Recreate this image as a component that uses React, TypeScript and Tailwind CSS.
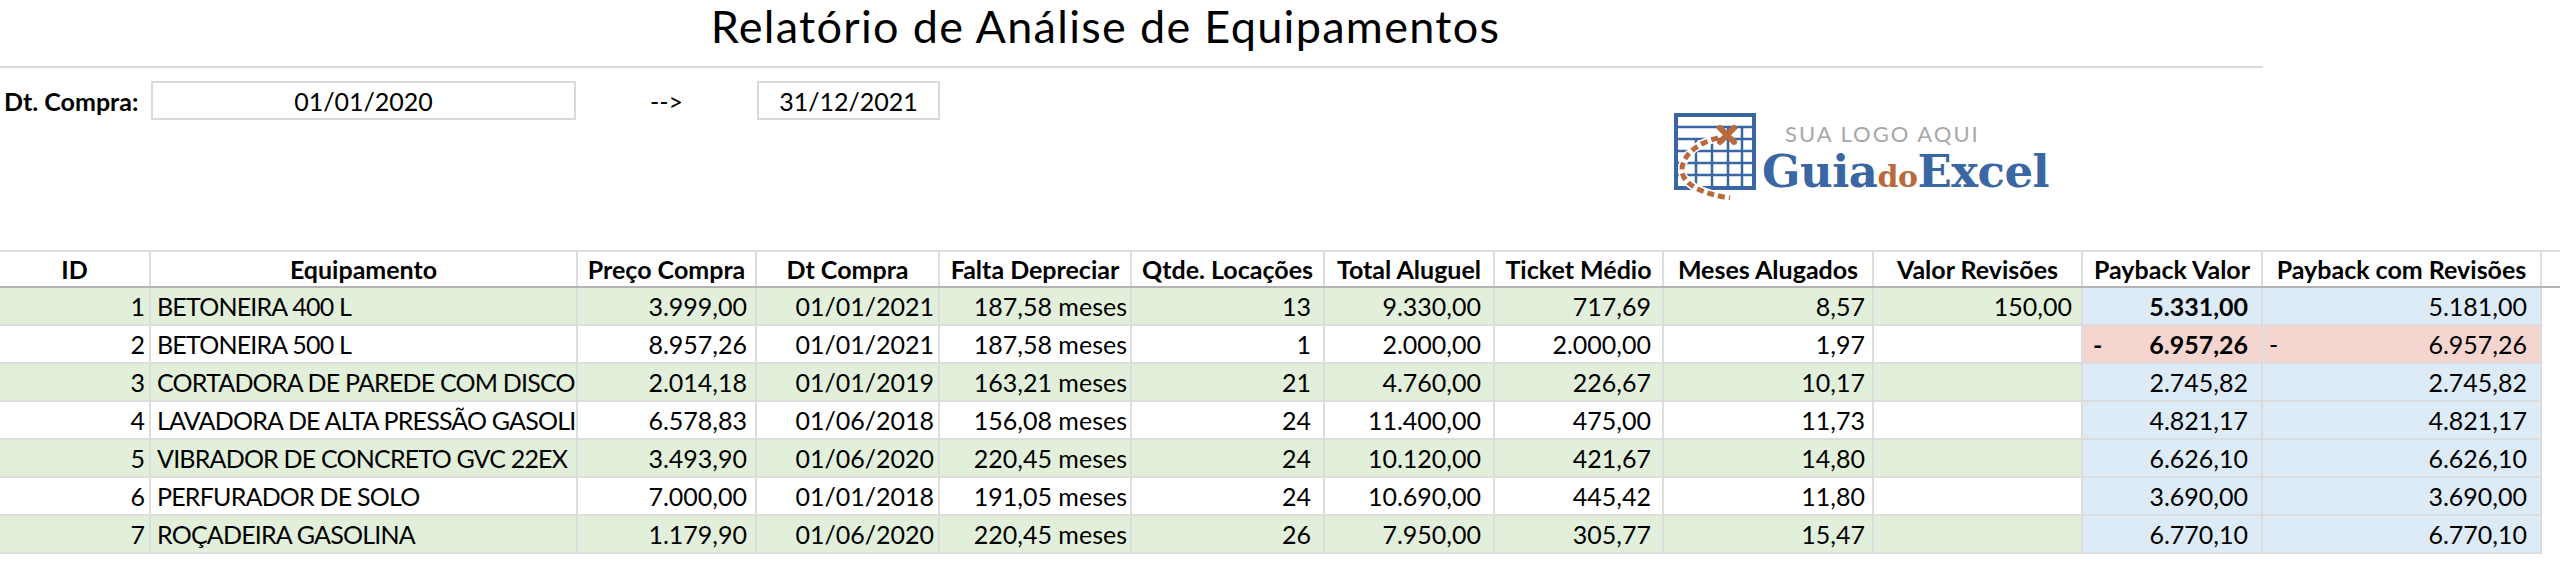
import React from "react";

const GRID =
  "grid grid-cols-[151px_427px_179px_183px_192px_193px_170px_169px_210px_209px_180px_279px]";

const HEADERS = [
  "ID",
  "Equipamento",
  "Preço Compra",
  "Dt Compra",
  "Falta Depreciar",
  "Qtde. Locações",
  "Total Aluguel",
  "Ticket Médio",
  "Meses Alugados",
  "Valor Revisões",
  "Payback Valor",
  "Payback com Revisões",
];

type Row = {
  id: number;
  name: string;
  preco: string;
  dt: string;
  falta: string;
  qtde: string;
  total: string;
  ticket: string;
  meses: string;
  revisoes: string;
  payback: string;
  paybackRev: string;
  negative?: boolean;
  boldPayback?: boolean;
};

const ROWS: Row[] = [
  { id: 1, name: "BETONEIRA 400 L", preco: "3.999,00", dt: "01/01/2021", falta: "187,58 meses", qtde: "13", total: "9.330,00", ticket: "717,69", meses: "8,57", revisoes: "150,00", payback: "5.331,00", paybackRev: "5.181,00", boldPayback: true },
  { id: 2, name: "BETONEIRA 500 L", preco: "8.957,26", dt: "01/01/2021", falta: "187,58 meses", qtde: "1", total: "2.000,00", ticket: "2.000,00", meses: "1,97", revisoes: "", payback: "6.957,26", paybackRev: "6.957,26", negative: true, boldPayback: true },
  { id: 3, name: "CORTADORA DE PAREDE COM DISCO", preco: "2.014,18", dt: "01/01/2019", falta: "163,21 meses", qtde: "21", total: "4.760,00", ticket: "226,67", meses: "10,17", revisoes: "", payback: "2.745,82", paybackRev: "2.745,82" },
  { id: 4, name: "LAVADORA DE ALTA PRESSÃO GASOLINA", preco: "6.578,83", dt: "01/06/2018", falta: "156,08 meses", qtde: "24", total: "11.400,00", ticket: "475,00", meses: "11,73", revisoes: "", payback: "4.821,17", paybackRev: "4.821,17" },
  { id: 5, name: "VIBRADOR DE CONCRETO GVC 22EX", preco: "3.493,90", dt: "01/06/2020", falta: "220,45 meses", qtde: "24", total: "10.120,00", ticket: "421,67", meses: "14,80", revisoes: "", payback: "6.626,10", paybackRev: "6.626,10" },
  { id: 6, name: "PERFURADOR DE SOLO", preco: "7.000,00", dt: "01/01/2018", falta: "191,05 meses", qtde: "24", total: "10.690,00", ticket: "445,42", meses: "11,80", revisoes: "", payback: "3.690,00", paybackRev: "3.690,00" },
  { id: 7, name: "ROÇADEIRA GASOLINA", preco: "1.179,90", dt: "01/06/2020", falta: "220,45 meses", qtde: "26", total: "7.950,00", ticket: "305,77", meses: "15,47", revisoes: "", payback: "6.770,10", paybackRev: "6.770,10" },
];

function LogoIcon() {
  return (
    <svg width="90" height="90" viewBox="0 0 90 90" className="shrink-0">
      <g stroke="#3a67a3" fill="none">
        <rect x="6" y="5" width="78" height="73" strokeWidth="4" />
        <line x1="6" y1="17" x2="84" y2="17" strokeWidth="2.5" />
        <line x1="6" y1="29" x2="84" y2="29" strokeWidth="2.5" />
        <line x1="6" y1="41" x2="84" y2="41" strokeWidth="2.5" />
        <line x1="6" y1="53" x2="84" y2="53" strokeWidth="2.5" />
        <line x1="6" y1="65" x2="84" y2="65" strokeWidth="2.5" />
        <line x1="26" y1="29" x2="26" y2="78" strokeWidth="2.5" />
        <line x1="42" y1="29" x2="42" y2="78" strokeWidth="2.5" />
        <line x1="58" y1="17" x2="58" y2="78" strokeWidth="2.5" />
        <line x1="72" y1="17" x2="72" y2="78" strokeWidth="2.5" />
      </g>
      <path
        d="M48 28 C 30 32, 12 44, 12 60 C 12 75, 34 84, 60 88"
        stroke="#ffffff"
        strokeWidth="8"
        fill="none"
      />
      <path
        d="M48 28 C 30 32, 12 44, 12 60 C 12 75, 34 84, 60 88"
        stroke="#b96a3c"
        strokeWidth="5"
        strokeDasharray="7 4"
        fill="none"
      />
      <g stroke="#b96a3c" strokeWidth="6" strokeLinecap="round">
        <line x1="50" y1="18" x2="64" y2="32" />
        <line x1="64" y1="18" x2="50" y2="32" />
      </g>
    </svg>
  );
}

function Logo() {
  return (
    <div className="flex items-start ml-[730px] mt-[42px]">
      <LogoIcon />
      <div className="flex flex-col items-start ml-[2px]">
        <span className="pl-[23px] mt-[12px] text-[22px] leading-[24px] tracking-[2px] font-normal text-[#a6a8a8] font-[Lato,sans-serif]">
          SUA LOGO AQUI
        </span>
        <span className="mt-[2px] leading-[48px] font-bold text-[#3a67a3] font-['DejaVu_Serif',serif] text-[45px] tracking-[-0.5px]">
          Guia
          <span className="text-[#b96a3c] text-[30px]">do</span>
          Excel
        </span>
      </div>
    </div>
  );
}

function HeaderRow() {
  return (
    <div className="w-full border-t-2 border-b-2 border-t-[#dcdcdc] border-b-[#b3b3b3]">
      <div className={GRID + " w-[2542px] h-[34px]"}>
        {HEADERS.map((h) => (
          <div
            key={h}
            className="flex items-center justify-center border-r-2 border-[#dcdcdc] font-bold whitespace-nowrap overflow-hidden"
          >
            {h}
          </div>
        ))}
      </div>
    </div>
  );
}

function DataRow({ row, index }: { row: Row; index: number }) {
  const green = index % 2 === 0;
  const base = green ? "bg-[#e2efda]" : "bg-white";
  const pay = row.negative ? "bg-[#f4d5cf]" : "bg-[#ddebf7]";
  const cell = "flex items-center h-full border-r-2 border-[#dcdcdc] whitespace-nowrap overflow-hidden";
  const num = cell + " justify-end " + base;

  return (
    <div className={GRID + " w-[2542px] h-[38px] border-b-2 border-[#dcdcdc]"}>
      <div className={num + " pr-[4px]"}>{row.id}</div>
      <div className={cell + " pl-[6px] tracking-[-0.8px] " + base}>{row.name}</div>
      <div className={num + " pr-[8px]"}>{row.preco}</div>
      <div className={num + " pr-[4px]"}>{row.dt}</div>
      <div className={num + " pr-[3px]"}>{row.falta}</div>
      <div className={num + " pr-[12px]"}>{row.qtde}</div>
      <div className={num + " pr-[12px]"}>{row.total}</div>
      <div className={num + " pr-[11px]"}>{row.ticket}</div>
      <div className={num + " pr-[7px]"}>{row.meses}</div>
      <div className={num + " pr-[9px]"}>{row.revisoes}</div>
      <div className={cell + " justify-between pl-[10px] pr-[13px] " + pay}>
        <span className={row.boldPayback ? "font-bold" : ""}>{row.negative ? "-" : ""}</span>
        <span className={row.boldPayback ? "font-bold" : ""}>{row.payback}</span>
      </div>
      <div className={cell + " justify-between pl-[6px] pr-[13px] " + pay}>
        <span>{row.negative ? "-" : ""}</span>
        <span>{row.paybackRev}</span>
      </div>
    </div>
  );
}

export default function App() {
  return (
    <div className="w-[2560px] h-[576px] bg-white text-black font-[Lato,sans-serif] text-[25px] leading-[30px] overflow-hidden">
      <div className="w-[2263px] h-[68px] border-b-2 border-[#dadada] flex justify-center pr-[52px]">
        <h1 className="text-[45px] leading-[52px] tracking-[1.3px] font-normal">
          Relatório de Análise de Equipamentos
        </h1>
      </div>

      <div className="flex items-start h-[182px]">
        <div className="flex items-center mt-[13px]">
          <div className="w-[151px] pl-[4px] font-bold">Dt. Compra:</div>
          <div className="w-[425px] h-[39px] border-2 border-[#dadada] flex items-center justify-center">
            01/01/2020
          </div>
          <div className="w-[181px] flex justify-center">--&gt;</div>
          <div className="w-[183px] h-[39px] border-2 border-[#dadada] flex items-center justify-center">
            31/12/2021
          </div>
        </div>
        <Logo />
      </div>

      <HeaderRow />
      {ROWS.map((r, i) => (
        <DataRow key={r.id} row={r} index={i} />
      ))}
    </div>
  );
}
